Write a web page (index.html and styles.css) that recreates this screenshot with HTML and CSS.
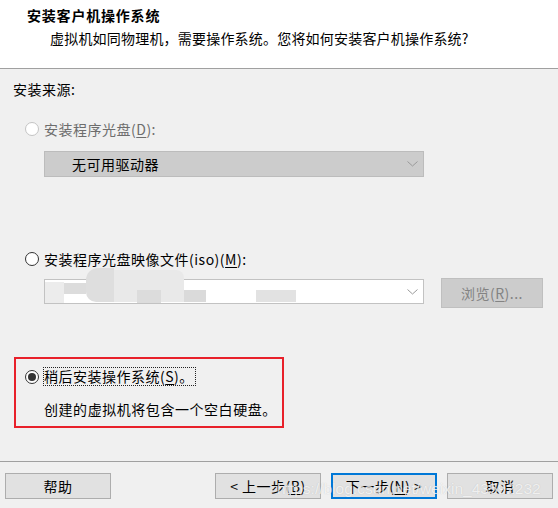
FILE: index.html
```html
<!DOCTYPE html>
<html lang="zh-CN">
<head>
<meta charset="utf-8">
<title>安装客户机操作系统</title>
<link rel="stylesheet" href="styles.css">
</head>
<body>
<div class="dialog">
  <div class="header">
    <div class="title">安装客户机操作系统</div>
    <div class="subtitle">虚拟机如同物理机，需要操作系统。您将如何安装客户机操作系统?</div>
  </div>
  <div class="main">
    <div class="source-label">安装来源:</div>

    <div class="radio-row r1 disabled">
      <span class="radio"></span>
      <span class="label">安装程序光盘(<u>D</u>):</span>
    </div>
    <div class="select disabled-select">
      <span class="select-text">无可用驱动器</span>
      <svg class="chev" width="11" height="6" viewBox="0 0 11 6"><path d="M0.5 0.5 L5.5 5 L10.5 0.5" fill="none" stroke="#9a9a9a" stroke-width="1"/></svg>
    </div>

    <div class="radio-row r2">
      <span class="radio"></span>
      <span class="label">安装程序光盘映像文件(iso)(<u>M</u>):</span>
    </div>
    <div class="iso-row">
      <div class="combo">
        <div class="blur">
          <span class="b1"></span><span class="b2"></span><span class="b3"></span><span class="b4"></span><span class="b5"></span><span class="b6"></span><span class="b7"></span>
        </div>
        <svg class="chev" width="11" height="6" viewBox="0 0 11 6"><path d="M0.5 0.5 L5.5 5 L10.5 0.5" fill="none" stroke="#9a9a9a" stroke-width="1"/></svg>
      </div>
      <div class="browse">浏览(<u>R</u>)...</div>
    </div>

    <div class="highlight">
      <div class="radio-row r3">
        <span class="radio checked"></span>
        <span class="label focus">稍后安装操作系统(<u>S</u>)。</span>
      </div>
      <div class="note">创建的虚拟机将包含一个空白硬盘。</div>
    </div>
  </div>
  <div class="footer">
    <div class="btn">帮助</div>
    <div class="btn-group">
      <div class="btn">&lt; 上一步(<u>B</u>)</div>
      <div class="btn primary">下一步(<u>N</u>) &gt;</div>
      <div class="btn">取消</div>
    </div>
  </div>
  <div class="watermark">https://blog.csdn.net/weixin_43592232</div>
</div>
</body>
</html>
```

FILE: styles.css
```css
html, body {
  margin: 0;
  padding: 0;
}
body {
  font-family: "Noto Sans CJK SC", "Noto Sans", sans-serif;
  font-size: 14px;
  color: #000;
  background: #f0f0f0;
}
.dialog {
  position: relative;
  width: 558px;
  height: 508px;
  display: flex;
  flex-direction: column;
  overflow: hidden;
}
u {
  text-decoration: underline;
  text-underline-offset: 2px;
  text-decoration-thickness: 1px;
}
.header {
  height: 68px;
  background: #fff;
  border-bottom: 1px solid #a0a0a0;
  box-sizing: content-box;
  padding: 0;
}
.title {
  font-weight: bold;
  line-height: 18px;
  padding: 6px 0 0 27px;
  letter-spacing: 0.8px;
}
.subtitle {
  line-height: 18px;
  padding: 5px 0 0 50px;
  letter-spacing: 0.2px;
}
.main {
  flex: 1;
  display: flex;
  flex-direction: column;
  align-items: flex-start;
  padding: 11px 0 0 0;
}
.source-label {
  line-height: 18px;
  padding-left: 13px;
  letter-spacing: 0.5px;
}
.radio-row {
  display: flex;
  align-items: center;
  height: 18px;
  padding-left: 25px;
  gap: 5px;
  letter-spacing: 0.5px;
}
.r1 { margin-top: 22px; }
.r2 { margin-top: 73px; }
.radio {
  width: 12px;
  height: 12px;
  border: 1px solid #333;
  border-radius: 50%;
  background: #fff;
  flex: none;
  display: flex;
  align-items: center;
  justify-content: center;
}
.disabled .radio {
  border-color: #c4c4c4;
}
.disabled .label {
  color: #6d6d6d;
}
.radio.checked::after {
  content: "";
  width: 8px;
  height: 8px;
  border-radius: 50%;
  background: #333;
}
.select {
  margin: 13px 0 0 44px;
  width: 380px;
  height: 26px;
  box-sizing: border-box;
  border: 1px solid #bcbcbc;
  background: #cccccc;
  display: flex;
  align-items: center;
  justify-content: space-between;
  padding: 0 5px 0 27px;
  letter-spacing: 0.5px;
}
.chev { flex: none; margin-left: auto; }
.iso-row {
  margin: 10px 0 0 44px;
  display: flex;
  align-items: flex-start;
  gap: 17px;
}
.combo {
  margin-top: 1px;
  width: 380px;
  height: 25px;
  box-sizing: border-box;
  border: 1px solid #c2c2c2;
  background: #fff;
  display: flex;
  align-items: center;
  padding-right: 5px;
  position: relative;
}
.blur {
  position: absolute;
  left: 0;
  top: -12px;
  width: 360px;
  height: 40px;
}
.blur span { position: absolute; display: block; }
.blur .b1 { left: 0; top: 14px; width: 19px; height: 21px; background: #ececec; }
.blur .b2 { left: 19px; top: 15px; width: 22px; height: 11px; background: #dcdcdc; }
.blur .b3 { left: 41px; top: 0; width: 28px; height: 34px; background: #dedede; border-radius: 12px 0 0 10px; }
.blur .b4 { left: 69px; top: 2px; width: 70px; height: 32px; background: #e9e9e9; border-radius: 0 8px 0 0; }
.blur .b5 { left: 92px; top: 22px; width: 24px; height: 13px; background: #dcdcdc; }
.blur .b6 { left: 139px; top: 22px; width: 22px; height: 12px; background: #dadada; }
.blur .b7 { left: 211px; top: 22px; width: 40px; height: 12px; background: #e2e2e2; }
.browse {
  width: 102px;
  height: 30px;
  box-sizing: border-box;
  border: 1px solid #bfbfbf;
  background: #cccccc;
  color: #838383;
  display: flex;
  align-items: center;
  justify-content: center;
  letter-spacing: 0.5px;
}
.highlight {
  margin: 49px 0 0 14px;
  width: 270px;
  box-sizing: border-box;
  border: 2px solid #e8202a;
  padding: 8px 0 8px 0;
}
.r3 {
  padding-left: 9px;
  height: 19px;
  gap: 4px;
}
.focus {
  border: 1px dotted #222;
  line-height: 17px;
  padding-right: 1px;
}
.note {
  line-height: 18px;
  padding: 14px 0 0 28px;
  letter-spacing: 0.55px;
}
.footer {
  height: 47px;
  border-top: 1px solid #a0a0a0;
  display: flex;
  justify-content: space-between;
  align-items: flex-start;
  padding: 11px 5px 0 5px;
  box-sizing: border-box;
}
.btn-group {
  display: flex;
  gap: 10px;
}
.btn {
  width: 106px;
  height: 26px;
  box-sizing: border-box;
  border: 1px solid #adadad;
  background: #e1e1e1;
  display: flex;
  align-items: center;
  justify-content: center;
  letter-spacing: 0.5px;
}
.btn.primary {
  border: 2px solid #0078d7;
}
.watermark {
  position: absolute;
  left: 277px;
  top: 479px;
  font-family: "Liberation Sans", Arial, sans-serif;
  font-size: 15.5px;
  line-height: 20px;
  color: rgba(255, 255, 255, 0.75);
  text-shadow: 0 0 1px rgba(120, 120, 120, 0.35);
  white-space: nowrap;
  pointer-events: none;
}
```
